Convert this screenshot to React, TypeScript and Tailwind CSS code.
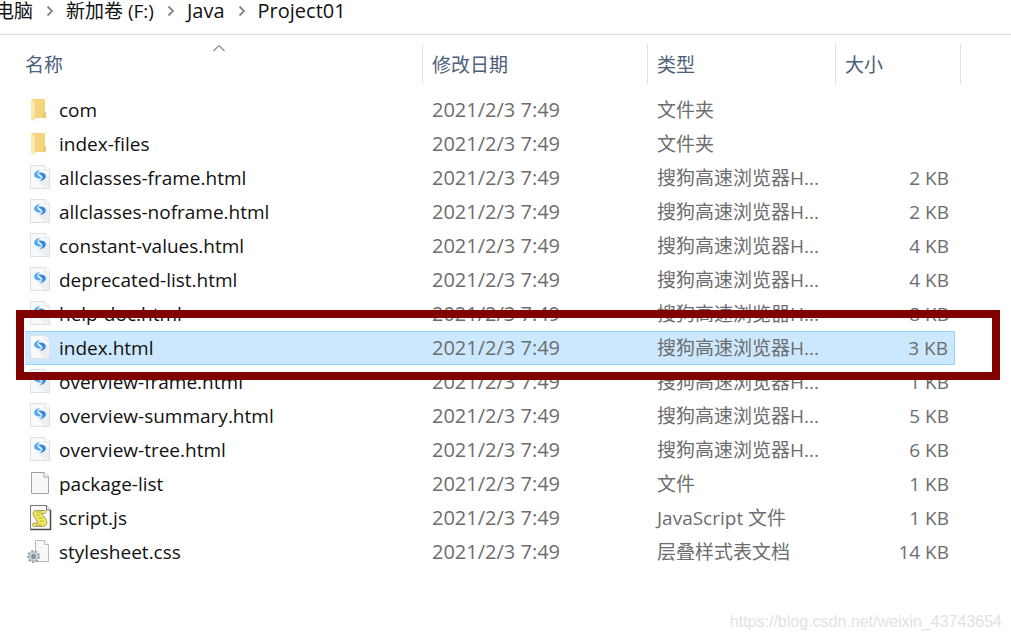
import React from "react";

type FileKind = "folder" | "html" | "file" | "script" | "css";

type FileItem = {
  name: string;
  kind: FileKind;
  type: string;
  size?: string;
  selected?: boolean;
};

const htmlType = "搜狗高速浏览器H...";
const modified = "2021/2/3 7:49";

const files: FileItem[] = [
  { name: "com", kind: "folder", type: "文件夹" },
  { name: "index-files", kind: "folder", type: "文件夹" },
  { name: "allclasses-frame.html", kind: "html", type: htmlType, size: "2 KB" },
  { name: "allclasses-noframe.html", kind: "html", type: htmlType, size: "2 KB" },
  { name: "constant-values.html", kind: "html", type: htmlType, size: "4 KB" },
  { name: "deprecated-list.html", kind: "html", type: htmlType, size: "4 KB" },
  { name: "help-doc.html", kind: "html", type: htmlType, size: "8 KB" },
  { name: "index.html", kind: "html", type: htmlType, size: "3 KB", selected: true },
  { name: "overview-frame.html", kind: "html", type: htmlType, size: "1 KB" },
  { name: "overview-summary.html", kind: "html", type: htmlType, size: "5 KB" },
  { name: "overview-tree.html", kind: "html", type: htmlType, size: "6 KB" },
  { name: "package-list", kind: "file", type: "文件", size: "1 KB" },
  { name: "script.js", kind: "script", type: "JavaScript 文件", size: "1 KB" },
  { name: "stylesheet.css", kind: "css", type: "层叠样式表文档", size: "14 KB" },
];

const crumbs = [
  { label: "电脑", className: "" },
  { label: "新加卷 (F:)", className: "" },
  { label: "Java", className: "text-xl" },
  { label: "Project01", className: "text-xl" },
];

const FileIcon: React.FC<{ kind: FileKind }> = ({ kind }) => {
  return (
    <svg
      width="26"
      height="28"
      viewBox="0 0 26 28"
      fill="none"
      className="shrink-0"
      aria-hidden="true"
    >
      {kind === "folder" && (
        <>
          <path d="M5 3h13v13l1 1v5H5z" fill="#f5d57b" />
          <path d="M16 16h3v6h-3z" fill="#eccb6e" />
          <path d="M4 3.5l5 2.5v16l-2 3-3-2z" fill="#fce8a8" />
          <path d="M8.5 6v16" stroke="#f0d284" />
        </>
      )}
      {kind === "html" && (
        <>
          <path d="M3.5 1.5h14.500l4.500 4.500V24.500h-19z" fill="#f8f9fa" stroke="#dde0e4" />
          <path d="M10 16l8-7 4 4v11h-5z" fill="#eceff1" />
          <path d="M18 1.500V6h4.500" fill="#fff" stroke="#dfe2e5" />
          <path
            d="M13.5 6.200C10 6 7.200 8 7.200 10.700c0 2.800 3 4.200 7.300 3.800-.2-2.200-3.700-2.500-4-4.800-.2-1.600 1.300-2.800 3-3.500z"
            fill="#55a9ee"
          />
          <path
            d="M13.5 6.200C10 6 7.200 8 7.200 10.700c0 2.800 3 4.200 7.300 3.800-.2-2.200-3.700-2.500-4-4.800-.2-1.600 1.300-2.800 3-3.500z"
            transform="rotate(180 13 11.5)"
            fill="#3289df"
          />
        </>
      )}
      {kind === "file" && (
        <>
          <path d="M4.500 2.500H17l4.500 4.500v16.500h-17z" fill="#f8f8f8" stroke="#a3a3a3" />
          <path d="M17 2.500V7h4.500" fill="#fff" stroke="#a3a3a3" />
        </>
      )}
      {kind === "script" && (
        <>
          <path d="M3.500 1.500h16l4 4.500v19.500h-20z" fill="#fdfdfd" stroke="#777" />
          <path d="M23.500 6v19.500h-20" stroke="#4b4b4b" strokeWidth="1.5" />
          <path d="M19.500 1.500V6h4" fill="#fff" stroke="#666" />
          <path
            d="M8 6.500h9.500c2 0 2 3 0 3h-3l4.500 6c2 2.500.5 7-3 7H7c-2 0-2-3.500 0-3.500h4L7.500 13C5.500 10.500 5.500 7.500 8 6.500z"
            fill="#efe75c"
            stroke="#8f8d55"
            strokeWidth="0.8"
          />
          <path d="M9 8h6M9.500 11h3.500M11.500 14h4M13 17h4M9 21h6" stroke="#a9a650" strokeWidth="0.8" />
        </>
      )}
      {kind === "css" && (
        <>
          <path d="M8.500 2.500h9l4 4v17h-13z" fill="#f7f8f8" stroke="#b9bcbe" />
          <path d="M17.500 2.500v4h4" fill="#fff" stroke="#b9bcbe" />
          <circle cx="6.500" cy="18.500" r="5.500" stroke="#9aa6b0" strokeWidth="2" strokeDasharray="2.300 1.500" />
          <circle cx="6.500" cy="18.500" r="4.500" fill="#cdd6dd" stroke="#a3afb8" />
          <circle cx="6.500" cy="18.500" r="2.200" fill="#66737f" />
          <circle cx="6.500" cy="18.500" r="0.800" fill="#dfe5ea" />
        </>
      )}
    </svg>
  );
};

const HeaderCell: React.FC<{ label: string; colSpan?: number; sorted?: boolean }> = ({
  label,
  colSpan,
  sorted,
}) => {
  return (
    <th
      colSpan={colSpan}
      aria-sort={sorted ? "ascending" : undefined}
      className="p-0 pb-[9px] text-left font-normal"
    >
      <button className="relative flex h-10 w-full items-center border-r border-[#e2e2e2] pt-[2px] pl-[9px] text-[#4c607a]">
        {label}
        {sorted && (
          <svg
            width="14"
            height="8"
            viewBox="0 0 14 8"
            fill="none"
            className="absolute top-0 left-1/2 -translate-x-1/2"
            aria-hidden="true"
          >
            <path d="M1.500 7l5.500-5.500L12.500 7" stroke="#8a8a8a" strokeWidth="1.2" />
          </svg>
        )}
      </button>
    </th>
  );
};

const FileRow: React.FC<{ file: FileItem }> = ({ file }) => {
  const cell = file.selected
    ? "p-0 border-y border-[#99d1ff] bg-[#cce8ff]"
    : "p-0";

  return (
    <tr className="relative h-[34px]">
      <td className="p-0">
        {/* frame drawn round the selected file */}
        {file.selected && (
          <div className="pointer-events-none absolute -top-[21px] -right-[39px] -bottom-[15px] left-0 z-10 border-8 border-[#800000]" />
        )}
      </td>
      <td className={cell}>
        <div className="flex items-center gap-x-[6px] pl-[2px] text-[#111]">
          <FileIcon kind={file.kind} />
          <span>{file.name}</span>
        </div>
      </td>
      <td className={`${cell} text-xl leading-6 text-[#6d6d6d]`}>
        <span className="pl-[9px]">{modified}</span>
      </td>
      <td className={`${cell} text-[#6d6d6d]`}>
        <span className="pl-[9px]">{file.type}</span>
      </td>
      <td
        className={`${cell} text-right text-[#6d6d6d] ${file.selected ? "border-r" : ""}`}
      >
        <span className="pr-[6px]">{file.size}</span>
      </td>
      <td className="p-0"></td>
    </tr>
  );
};

const App: React.FC = () => {
  return (
    <div className="flex min-h-screen flex-col overflow-hidden bg-white font-['Open_Sans','Noto_Sans_CJK_SC',sans-serif] text-[19px] leading-6 whitespace-nowrap">
      {/* address bar */}
      <nav className="border-b border-[#d9d9d9] pb-3">
        <ol className="-ml-[5px] flex h-[22px] items-center text-[#111]">
          {crumbs.map((crumb, i) => (
            <li key={crumb.label} className="flex items-center">
              {i > 0 && (
                <svg width="33" height="12" viewBox="0 0 33 12" fill="none" aria-hidden="true">
                  <path d="M14.500 1.500L19 6l-4.500 4.500" stroke="#858585" strokeWidth="1.8" />
                </svg>
              )}
              <a href="#" className={crumb.className}>
                {crumb.label}
              </a>
            </li>
          ))}
        </ol>
      </nav>

      {/* file list */}
      <main className="pt-[9px] pr-[50px] pl-4">
        <table className="w-full table-fixed border-separate border-spacing-0">
          <colgroup>
            <col className="w-[9px]" />
            <col />
            <col className="w-[225px]" />
            <col className="w-[188px]" />
            <col className="w-[119px]" />
            <col className="w-[6px]" />
          </colgroup>
          <thead>
            <tr>
              <HeaderCell label="名称" colSpan={2} sorted />
              <HeaderCell label="修改日期" />
              <HeaderCell label="类型" />
              <HeaderCell label="大小" colSpan={2} />
            </tr>
          </thead>
          <tbody>
            {files.map((file) => (
              <FileRow key={file.name} file={file} />
            ))}
          </tbody>
        </table>
      </main>

      <footer className="mt-auto pr-[9px] pb-[6px] text-right font-['Liberation_Sans',Arial,sans-serif] text-base text-[#e2e2e2]">
        https://blog.csdn.net/weixin_43743654
      </footer>
    </div>
  );
};

export default App;
